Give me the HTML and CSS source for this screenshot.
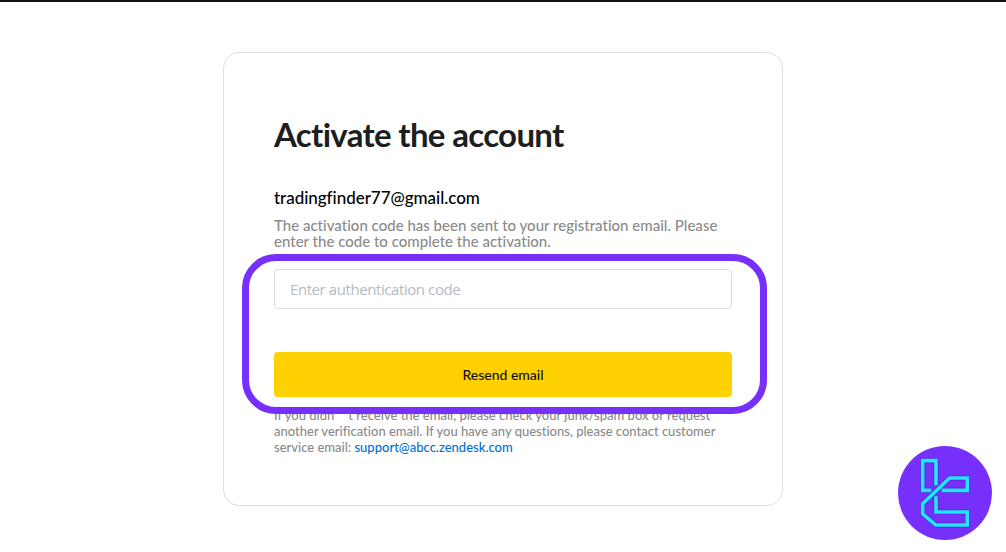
FILE: index.html
```html
<!DOCTYPE html>
<html lang="en">
  <head>
    <meta charset="utf-8" />
    <title>Activate the account</title>
    <link rel="stylesheet" href="styles.css">
  </head>

  <body>
    <main class="card">
      <h1>Activate the account</h1>
      <p class="account">tradingfinder77@gmail.com</p>
      <p class="message">
        The activation code has been sent to your registration email. Please<br>
        enter the code to complete the activation.
      </p>

      <form class="code-form">
        <input type="text" class="code-input" placeholder="Enter authentication code">
        <button type="button" class="resend">Resend email</button>
        <div class="highlight"></div>
      </form>

      <p class="help">
        If you didn<span class="gap"></span>t receive the email, please check your junk/spam box or request<br>
        another verification email. If you have any questions, please contact customer<br>
        service email: <a href="#">support@abcc.zendesk.com</a>
      </p>
    </main>

    <svg class="logo" viewBox="24 17 282 282" fill="none">
      <circle cx="165" cy="158" r="141" fill="#7730fb" />
      <g stroke="#5a1fd0" stroke-width="15">
        <path d="M138 135V61H98V150H124" />
        <path d="M155 150H232V113H179L98 190V221L137 254H232V215H138V168" />
      </g>
      <g stroke="#22e6fd" stroke-width="11">
        <path d="M138 135V61H98V150H124" />
        <path d="M155 150H232V113H179L98 190V221L137 254H232V215H138V168" />
      </g>
    </svg>
  </body>
</html>
```

FILE: styles.css
```css
* {
  box-sizing: border-box;
}
body {
  margin: 0;
  height: 552px;
  padding-top: 50px;
  border-top: 2px solid #111;
  background-color: #fff;
  font-family: Lato, sans-serif;
  font-variant-ligatures: none;
  overflow: hidden;
}
.card {
  width: 560px;
  height: 454px;
  margin: 0 auto;
  padding: 61px 50px 0;
  border: 1px solid #dedfe2;
  border-radius: 16px;
}
h1 {
  margin: 0;
  font-size: 33px;
  line-height: 40px;
  font-weight: 700;
  letter-spacing: -0.67px;
  color: #1c1e20;
  white-space: nowrap;
}
p {
  margin: 0;
  white-space: nowrap;
}
.account {
  margin-top: 33px;
  font-size: 17px;
  line-height: 22px;
  font-weight: 500;
  letter-spacing: -0.03px;
  color: #000;
}
.message {
  margin-top: 8px;
  font-size: 15px;
  line-height: 16px;
  font-weight: 500;
  letter-spacing: 0.01px;
  color: #8b8b8b;
}
.code-form {
  position: relative;
  display: flex;
  flex-direction: column;
  margin-top: 20px;
}
.code-input {
  height: 40px;
  padding: 0 15px;
  border: 1px solid #dcdde0;
  border-radius: 4px;
  font-family: "Open Sans", sans-serif;
  font-size: 15px;
  letter-spacing: -0.42px;
}
.code-input::placeholder {
  color: #b7bac2;
}
.resend {
  height: 45px;
  margin-top: 43px;
  border: 0;
  border-radius: 4px;
  background-color: #ffd100;
  color: #111;
  font-family: Lato, sans-serif;
  font-size: 14px;
  font-weight: 500;
}
/* Ring drawn over the form and the first help line */
.highlight {
  position: absolute;
  top: -15px;
  left: -32px;
  width: 525px;
  height: 160px;
  border: 7px solid #7730fb;
  border-radius: 34px;
  pointer-events: none;
}
.help {
  margin-top: 10px;
  font-size: 13px;
  line-height: 16px;
  font-weight: 500;
  color: #8b8b8b;
}
.gap {
  display: inline-block;
  width: 14px;
}
.help a {
  color: #0070d2;
  text-decoration: none;
}
.logo {
  position: absolute;
  left: 898px;
  top: 445.5px;
  width: 94px;
  height: 94px;
}
```
